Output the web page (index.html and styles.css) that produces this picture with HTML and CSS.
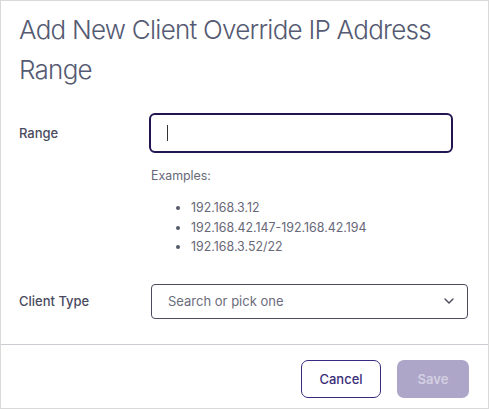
FILE: index.html
```html
<!DOCTYPE html>
<html lang="en">
<head>
<meta charset="utf-8">
<title>Add New Client Override IP Address Range</title>
<link rel="stylesheet" href="styles.css">
</head>
<body>
<div class="dialog">
  <h1 class="title">Add New Client Override IP Address Range</h1>
  <div class="body">
    <div class="row row-range">
      <label class="label" for="range">Range</label>
      <div class="field">
        <div class="input-wrap"><input id="range" class="input" type="text"><span class="caret"></span></div>
        <div class="hint">
          <p class="hint-title">Examples:</p>
          <ul class="hint-list">
            <li>192.168.3.12</li>
            <li>192.168.42.147-192.168.42.194</li>
            <li>192.168.3.52/22</li>
          </ul>
        </div>
      </div>
    </div>
    <div class="row row-type">
      <label class="label">Client Type</label>
      <div class="select">
        <span class="placeholder">Search or pick one</span>
        <svg class="chevron" width="10" height="6" viewBox="0 0 10 6"><path d="M1 1l4 4 4-4" fill="none" stroke="#4a4a5e" stroke-width="1.4" stroke-linecap="round" stroke-linejoin="round"/></svg>
      </div>
    </div>
  </div>
  <div class="footer">
    <button class="btn btn-cancel">Cancel</button>
    <button class="btn btn-save" disabled>Save</button>
  </div>
</div>
</body>
</html>
```
FILE: styles.css
```css
* { box-sizing: border-box; }
html, body { margin: 0; padding: 0; }
body { font-family: Inter, "Noto Sans", sans-serif; background: #fff; }
.dialog {
  width: 489px;
  height: 409px;
  border: 1px solid #d9d9d9;
  display: flex;
  flex-direction: column;
}
.title {
  margin: 0;
  padding: 9px 40px 0 18px;
  font-size: 26px;
  line-height: 40px;
  font-weight: 300;
  letter-spacing: -0.75px;
  color: #555a72;
}
.body {
  flex: 1;
  padding: 23px 0 0 18px;
}
.row {
  display: grid;
  grid-template-columns: 130px 1fr;
}
.label {
  font-size: 13px;
  font-weight: 500;
  color: #4a4b5e;
}
.row-range .label { line-height: 40px; }
.input-wrap { position: relative; width: 304px; }
.input {
  display: block;
  width: 304px;
  height: 40px;
  border: 2px solid #231650;
  border-radius: 6px;
  outline: none;
  padding: 0 16px;
  font: inherit;
}
.caret {
  position: absolute;
  left: 18px;
  top: 12px;
  width: 1px;
  height: 16px;
  background: #333;
}
.hint { padding-left: 2px; color: #676878; font-size: 12.4px; }
.hint-title { margin: 15px 0 0; line-height: 16px; }
.hint-list { margin: 14px 0 0; padding-left: 40px; line-height: 18.5px; }
.hint-list li::marker { font-size: 13px; color: #555a6a; }
.row-type { margin-top: 27px; align-items: center; }
.select {
  width: 317px;
  height: 35px;
  margin-left: 2px;
  border: 1px solid #4a4b5e;
  border-radius: 4px;
  display: flex;
  align-items: center;
  justify-content: space-between;
  padding: 0 13px 0 16px;
}
.placeholder { font-size: 13px; color: #6b6c7c; }
.footer {
  border-top: 1px solid #cbcbd2;
  display: flex;
  justify-content: flex-end;
  gap: 16px;
  padding: 15px 19px 10px 0;
  height: 64px;
}
.btn {
  font-family: inherit;
  font-size: 13px;
  font-weight: 600;
  height: 38px;
  border-radius: 7px;
  cursor: pointer;
}
.btn-cancel {
  width: 80px;
  background: #fff;
  border: 1px solid #3a2a80;
  color: #3a2d78;
  font-weight: 500;
}
.btn-save {
  width: 72px;
  background: #aea6c8;
  border: none;
  color: #d4cfe3;
}
```
